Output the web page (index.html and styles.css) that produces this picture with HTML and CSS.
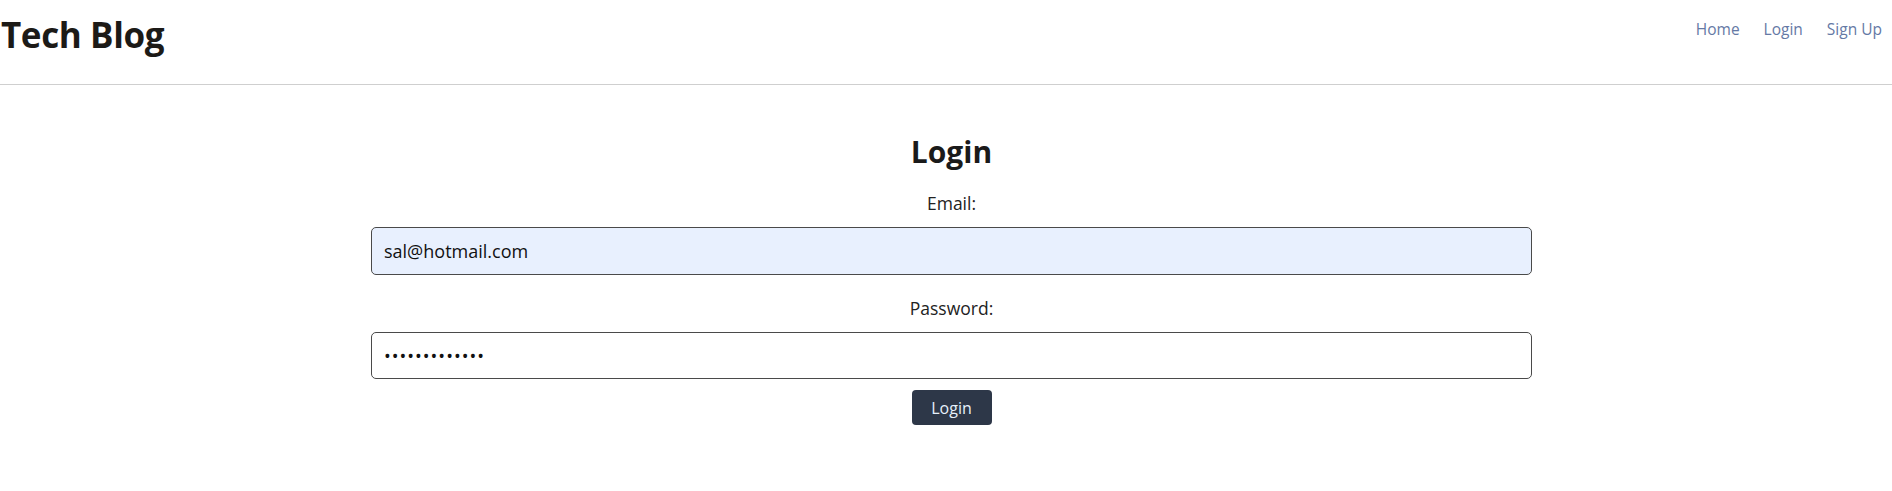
FILE: index.html
```html
<!DOCTYPE html>
<html lang="en">
<head>
<meta charset="utf-8">
<title>Tech Blog</title>
<link rel="stylesheet" href="styles.css">
</head>
<body>
<header class="site-header">
  <h1 class="brand">Tech Blog</h1>
  <nav class="nav">
    <a href="#" class="nav-link">Home</a>
    <a href="#" class="nav-link">Login</a>
    <a href="#" class="nav-link">Sign Up</a>
  </nav>
</header>
<main class="main">
  <form class="login-form">
    <h2 class="form-title">Login</h2>
    <label class="field-label" for="email">Email:</label>
    <input class="field-input autofilled" id="email" type="email" value="sal@hotmail.com">
    <label class="field-label" for="password">Password:</label>
    <input class="field-input" id="password" type="password" value="sal123456789a">
    <button class="btn" type="button">Login</button>
  </form>
</main>
</body>
</html>
```

FILE: styles.css
```css
* { box-sizing: border-box; }

body {
  margin: 0;
  font-family: "Open Sans", "Noto Sans", sans-serif;
  color: #1a1a1a;
  background: #fff;
}

.site-header {
  height: 85px;
  border-bottom: 1px solid #cfcfcf;
  display: flex;
  justify-content: space-between;
  align-items: flex-start;
  padding: 0 10px 0 1px;
}

.brand {
  margin: 0;
  padding-top: 10px;
  font-size: 35px;
  line-height: 50px;
  font-weight: 700;
  color: #1c1a17;
  letter-spacing: -0.4px;
}

.nav {
  display: flex;
  gap: 24px;
  padding-top: 17px;
}

.nav-link {
  font-size: 15.5px;
  line-height: 24px;
  color: #6579a5;
  text-decoration: none;
}

.main {
  padding-left: 11px;
}

.login-form {
  width: 1161px;
  margin: 0 auto;
  display: flex;
  flex-direction: column;
  align-items: center;
}

.form-title {
  margin: 45px 0 17px;
  font-size: 30px;
  line-height: 44px;
  font-weight: 700;
  color: #1a1a1a;
}

.field-label {
  font-size: 17.5px;
  line-height: 24px;
  color: #222;
}

.field-input {
  width: 100%;
  height: 48px;
  margin-top: 12px;
  margin-bottom: 21px;
  padding: 0 12px;
  border: 1px solid #4a4a4a;
  border-radius: 5px;
  font-family: inherit;
  font-size: 18px;
  color: #111;
  background: #fff;
  outline: none;
}

.field-input.autofilled {
  background: #e8f0fe;
}

.field-input[type="password"] {
  height: 47px;
  margin-bottom: 11px;
  letter-spacing: 1px;
}

.btn {
  width: 80px;
  height: 35px;
  border: none;
  border-radius: 4px;
  background: #2d3748;
  color: #e6f0fb;
  font-family: inherit;
  font-size: 16px;
  cursor: pointer;
}
```
